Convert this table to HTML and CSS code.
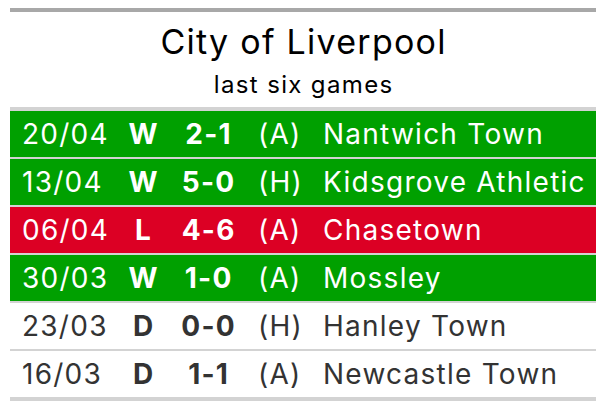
FILE: index.html
```html
<!DOCTYPE html>
<html lang="en">
<head>
<meta charset="utf-8">
<title>City of Liverpool</title>
<link rel="stylesheet" href="styles.css">
</head>
<body>
<div class="results">
  <div class="heading">
    <div class="title">City of Liverpool</div>
    <div class="subtitle">last six games</div>
  </div>
  <div class="row win">
    <span class="date">20/04</span><span class="res">W</span><span class="score">2-1</span><span class="venue">(A)</span><span class="team">Nantwich Town</span>
  </div>
  <div class="row win">
    <span class="date">13/04</span><span class="res">W</span><span class="score">5-0</span><span class="venue">(H)</span><span class="team">Kidsgrove Athletic</span>
  </div>
  <div class="row loss">
    <span class="date">06/04</span><span class="res">L</span><span class="score">4-6</span><span class="venue">(A)</span><span class="team">Chasetown</span>
  </div>
  <div class="row win">
    <span class="date">30/03</span><span class="res">W</span><span class="score">1-0</span><span class="venue">(A)</span><span class="team">Mossley</span>
  </div>
  <div class="row draw">
    <span class="date">23/03</span><span class="res">D</span><span class="score">0-0</span><span class="venue">(H)</span><span class="team">Hanley Town</span>
  </div>
  <div class="row draw last">
    <span class="date">16/03</span><span class="res">D</span><span class="score">1-1</span><span class="venue">(A)</span><span class="team">Newcastle Town</span>
  </div>
</div>
</body>
</html>
```

FILE: styles.css
```css
html, body {
  background: #ffffff;
}
body {
  margin: 8px 8px 8px 10px;
  font-family: Inter, "Liberation Sans", sans-serif;
  color: #333333;
}
.results {
  width: 586px;
  border-top: 4px solid #a8a8a8;
}
.heading {
  text-align: center;
  color: #000000;
  padding: 10px 0 7px;
  border-bottom: 4px solid #d3d3d3;
}
.title {
  font-size: 34px;
  line-height: 40px;
  font-weight: 400;
  letter-spacing: 1.25px;
  text-indent: 1.25px;
}
.subtitle {
  font-size: 24px;
  line-height: 30px;
  margin-top: 8px;
  letter-spacing: 1.35px;
  text-indent: 1.35px;
}
.row {
  display: grid;
  grid-template-columns: 108px 50px 80px 65px 1fr;
  height: 46px;
  line-height: 46px;
  font-size: 28px;
  letter-spacing: 1.25px;
  border-bottom: 2px solid #d3d3d3;
  white-space: nowrap;
}
.row.last {
  border-bottom-width: 4px;
}
.win {
  background: #00a000;
  color: #ffffff;
}
.loss {
  background: #dc0024;
  color: #ffffff;
}
.draw {
  background: #ffffff;
  color: #333333;
}
.date {
  padding-left: 12px;
}
.res {
  text-align: center;
  font-weight: 700;
  text-indent: 1.25px;
}
.score {
  text-align: center;
  font-weight: 700;
  text-indent: 1.25px;
}
.venue {
  padding-left: 10px;
}
.team {
  padding-left: 10px;
}
```
